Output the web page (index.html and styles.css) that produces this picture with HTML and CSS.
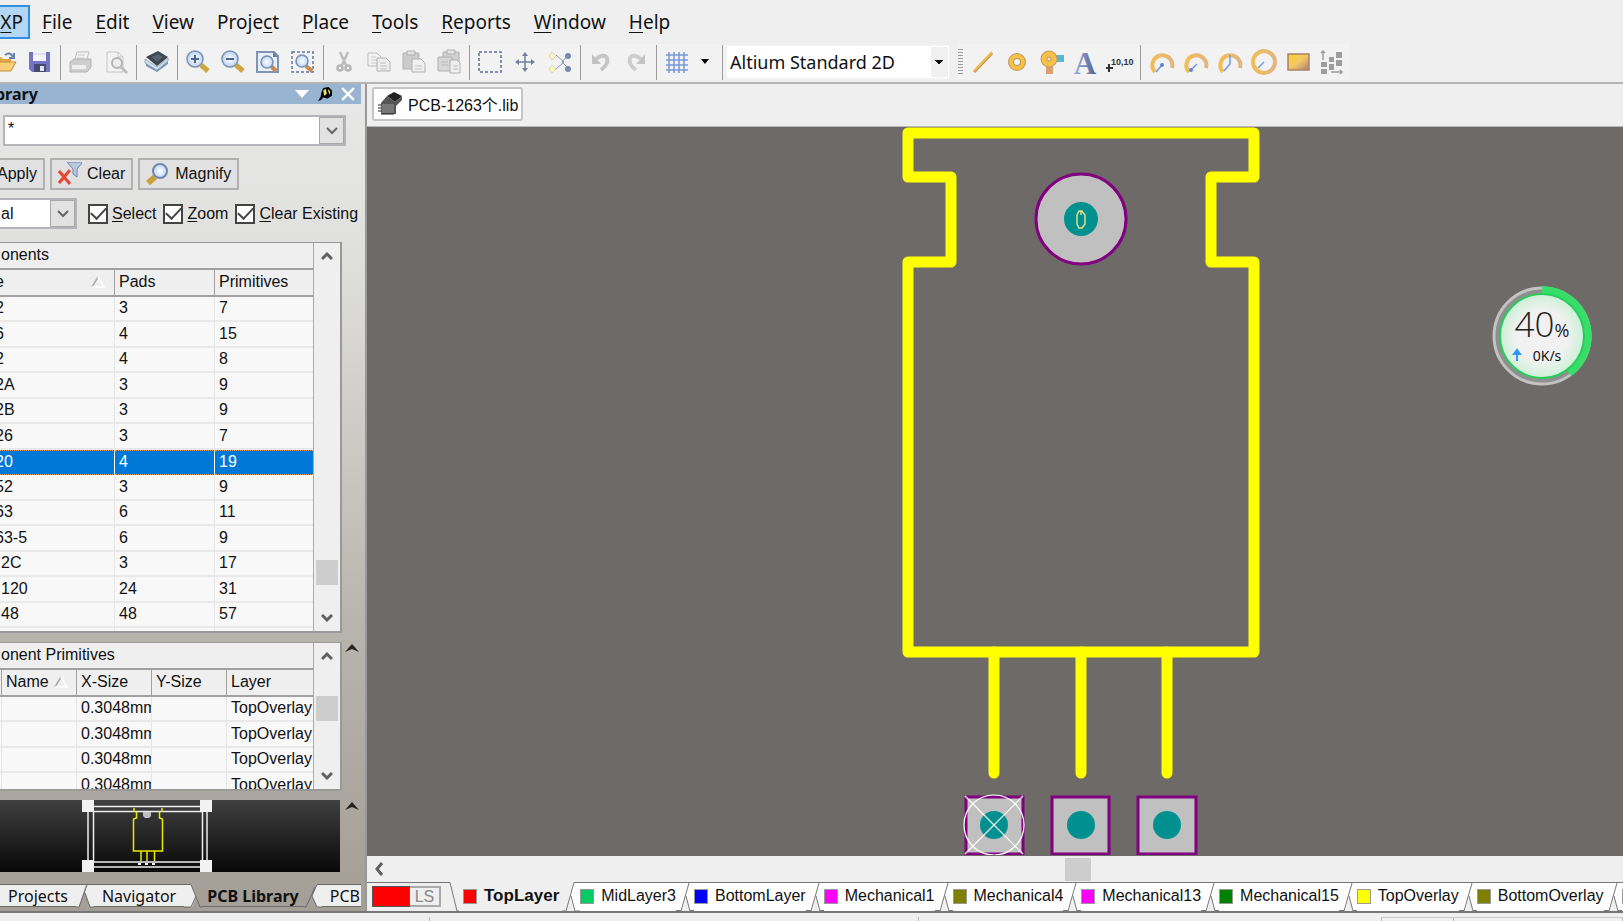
FILE: index.html
```html
<!DOCTYPE html>
<html lang="en">
<head>
  <meta charset="UTF-8" />
  <meta name="viewport" content="width=device-width, initial-scale=1.0"/>
  <title>PCB Library</title>
  <link rel="stylesheet" href="styles.css">
</head>
<body>
  <svg class="defs" width="0" height="0" aria-hidden="true">
    <defs>
      <linearGradient id="gold" x1="0" y1="0" x2="1" y2="1">
        <stop offset="0" stop-color="#fcd02e"/><stop offset="0.5" stop-color="#f3c867"/><stop offset="1" stop-color="#b07878"/>
      </linearGradient>
      <linearGradient id="arc" x1="0" y1="0" x2="1" y2="0">
        <stop offset="0" stop-color="#f3bd55"/><stop offset="1" stop-color="#e2b583"/>
      </linearGradient>
      <linearGradient id="blueA" x1="0" y1="0" x2="1" y2="0">
        <stop offset="0" stop-color="#9aaee0"/><stop offset="1" stop-color="#53618c"/>
      </linearGradient>
      <radialGradient id="glass">
        <stop offset="0" stop-color="#ffffff"/><stop offset="1" stop-color="#bcd3f4"/>
      </radialGradient>
      <radialGradient id="ball">
        <stop offset="0.6" stop-color="#f1f1f1"/><stop offset="1" stop-color="#cdf0d6"/>
      </radialGradient>
    </defs>
  </svg>

  <nav class="menubar">
    <button class="active"><u>X</u>P</button>
    <button><u>F</u>ile</button>
    <button><u>E</u>dit</button>
    <button><u>V</u>iew</button>
    <button>Proje<u>c</u>t</button>
    <button><u>P</u>lace</button>
    <button><u>T</u>ools</button>
    <button><u>R</u>eports</button>
    <button><u>W</u>indow</button>
    <button><u>H</u>elp</button>
  </nav>

  <div class="toolbar">
    <div class="tools">
      <button title="Open"><svg viewBox="0 0 24 24"><path d="M1 7h7l2 2h8v12H1z" fill="#e3a845"/><path d="M5 12h18l-5 9H1z" fill="#f9cf76" stroke="#c28b34"/><path d="M12 5q5-4 8 2M21 3v5h-5" fill="none" stroke="#6883ac" stroke-width="2"/></svg></button>
      <button title="Save"><svg viewBox="0 0 24 24"><path d="M1 2h21v20H4l-3-3z" fill="#7375c4"/><path d="M5 2h13v9H5z" fill="#f4f4fb"/><path d="M5 4h13" stroke="#c8c9e8"/><path d="M6 14h12v8H6z" fill="#454a72"/><path d="M12 16h4v5h-4z" fill="#e4e4f0"/></svg></button>
      <span class="sep"></span>
      <button title="Print"><svg viewBox="0 0 24 24"><path d="M8 2h12l-3 10H5z" fill="#f4f4f4" stroke="#bdbdbd"/><path d="M9 5h7M8 8h7" stroke="#c8c8c8"/><path d="M1 12l4-3h17v8l-4 5H1z" fill="#cecece" stroke="#b4b4b4"/><path d="M3 15h14v4H3z" fill="#eee"/></svg></button>
      <button title="Preview"><svg viewBox="0 0 24 24"><path d="M3 2h11l5 5v15H3z" fill="#f3f3f3" stroke="#c6c6c6"/><path d="M14 2v5h5" fill="none" stroke="#c6c6c6"/><circle cx="13" cy="13" r="5" fill="#ececec" stroke="#b4b4b4" stroke-width="2"/><path d="M17 17l6 6" stroke="#bdbdbd" stroke-width="3"/></svg></button>
      <span class="sep"></span>
      <button title="Board"><svg viewBox="0 0 24 24"><path d="M1 13l11 7 11-9v3l-11 8-11-6z" fill="#7895b5"/><path d="M0 9l12 8 11-9v3l-11 9-12-7z" fill="#d2e0ec" stroke="#94a9bf"/><path d="M1 7l12-6 10 6-11 9z" fill="#3d4650"/><path d="M6 7l7-3 5 3-6 5z" fill="#56626f"/></svg></button>
      <span class="sep"></span>
      <button title="Zoom in"><svg viewBox="0 0 24 24"><path d="M15 15l7 6" stroke="#d0a540" stroke-width="5"/><circle cx="9" cy="9" r="8" fill="url(#glass)" stroke="#7890b4" stroke-width="1.5"/><path d="M5 9h8M9 5v8" stroke="#4d6388" stroke-width="2"/></svg></button>
      <button title="Zoom out"><svg viewBox="0 0 24 24"><path d="M15 15l7 6" stroke="#d0a540" stroke-width="5"/><circle cx="9" cy="9" r="8" fill="url(#glass)" stroke="#7890b4" stroke-width="1.5"/><path d="M5 9h8" stroke="#4d6388" stroke-width="2"/></svg></button>
      <button title="Fit document"><svg viewBox="0 0 24 24"><path d="M1 2h17l4 4v16H1z" fill="#e9eff9" stroke="#8093b4" stroke-width="2"/><path d="M17 2v5h5" fill="#6b80a4"/><path d="M15 16l5 5" stroke="#c98a4f" stroke-width="4"/><circle cx="11" cy="12" r="6" fill="url(#glass)" stroke="#7890b4" stroke-width="1.5"/></svg></button>
      <button title="Zoom area"><svg viewBox="0 0 24 24"><path d="M1 2h21v20H1z" fill="none" stroke="#66779a" stroke-width="1.5" stroke-dasharray="3 2"/><path d="M15 16l6 5" stroke="#c98a4f" stroke-width="4"/><circle cx="11" cy="11" r="6" fill="url(#glass)" stroke="#7890b4" stroke-width="1.5"/></svg></button>
      <span class="sep"></span>
      <button title="Cut"><svg viewBox="0 0 24 24"><path d="M8 2l6 13M16 2l-6 13" stroke="#bcbcbc" stroke-width="2.5"/><circle cx="8" cy="18" r="2.500" fill="none" stroke="#b6b6b6" stroke-width="2.500"/><circle cx="16" cy="18" r="2.500" fill="none" stroke="#b6b6b6" stroke-width="2.500"/></svg></button>
      <button title="Copy"><svg viewBox="0 0 24 24"><path d="M1 3h9l4 4v9H1z" fill="#f2f2f2" stroke="#bcbcbc"/><path d="M4 7h5M4 10h6M4 13h6" stroke="#cacaca"/><path d="M10 8h9l4 4v9H10z" fill="#ededed" stroke="#b2b2b2"/><path d="M13 13h6M13 16h7M13 19h7" stroke="#c0c0c0"/></svg></button>
      <button title="Paste"><svg viewBox="0 0 24 24"><path d="M1 3h16v16H1z" fill="#cbcbcb" stroke="#b4b4b4"/><path d="M5 1h8v4H5z" fill="#e2e2e2" stroke="#b0b0b0"/><path d="M10 9h9l4 4v9H10z" fill="#f0f0f0" stroke="#b0b0b0"/><path d="M13 16h7M13 19h7" stroke="#c3c3c3"/></svg></button>
      <button title="Paste array"><svg viewBox="0 0 24 24"><path d="M6 2h16v14H6z" fill="#d1d1d1" stroke="#b0b0b0"/><path d="M10 0h8v4h-8z" fill="#e5e5e5" stroke="#b0b0b0"/><path d="M1 7h14v14H1z" fill="#d7d7d7" stroke="#b0b0b0"/><path d="M13 10h7l3 3v10H13z" fill="#efefef" stroke="#b0b0b0"/><path d="M4 12h7M4 15h7M16 16h5M16 19h5" stroke="#bbb"/></svg></button>
      <span class="sep"></span>
      <button title="Select area"><svg viewBox="0 0 24 24"><path d="M1 2h22v20H1z" fill="none" stroke="#5f6f94" stroke-width="1.5" stroke-dasharray="3 2"/></svg></button>
      <button title="Move"><svg viewBox="0 0 24 24"><path d="M3 12h18M12 3v18" stroke="#71809c" stroke-width="1.5"/><path d="M2 12l4-3v6zM22 12l-4-3v6zM12 2l-3 4h6zM12 22l-3-4h6z" fill="#71809c"/></svg></button>
      <button title="Clear filter"><svg viewBox="0 0 24 24"><path d="M8 5l8 7-8 7M14 12l8 8M14 12l6-7" fill="none" stroke="#8f9cb4"/><path d="M4 2l4 4-4 4-3-4zM4 15l4 4-4 4-3-4z" fill="#fbf8bc" stroke="#b9bbaf" stroke-width=".5"/><circle cx="20" cy="6" r="3" fill="#7589ad"/><circle cx="20" cy="19" r="3" fill="#7589ad"/></svg></button>
      <span class="sep"></span>
      <button title="Undo"><svg viewBox="0 0 24 24"><path d="M7 9q8-6 11-1 2 6-6 12" fill="none" stroke="#c6c6c6" stroke-width="4"/><path d="M3 4v10h9z" fill="#c1c1c1"/></svg></button>
      <button title="Redo"><svg viewBox="0 0 24 24"><path d="M17 9q-8-6-11-1-2 6 6 12" fill="none" stroke="#cecece" stroke-width="4"/><path d="M21 4v10h-9z" fill="#c4c4c4"/></svg></button>
      <span class="sep"></span>
      <button title="Grid"><svg viewBox="0 0 24 24"><path d="M1 5h22M1 10h22M1 15h22M1 20h22M4 2v21M9 2v21M14 2v21M19 2v21" stroke="#7899d8" stroke-width="1.5"/></svg></button>
      <button class="narrow" title="Grid options"><svg viewBox="0 0 10 6"><path d="M1 0h8L5 5z"/></svg></button>
      <span class="sep last"></span>
      <select aria-label="View configuration"><option>Altium Standard 2D</option></select>
    </div>
    <div class="tools draw">
      <span class="grip"></span>
      <button title="Line"><svg viewBox="0 0 24 24"><path d="M3 22L21 3" stroke="#c88f52" stroke-width="3"/><path d="M3 21L21 2" stroke="#f5bd4b" stroke-width="2"/></svg></button>
      <button title="Pad"><svg viewBox="0 0 24 24"><circle cx="12" cy="12" r="6" fill="none" stroke="#be9560" stroke-width="6"/><circle cx="12" cy="12" r="6" fill="none" stroke="#f7c149" stroke-width="4"/></svg></button>
      <button title="Via"><svg viewBox="0 0 24 24"><path d="M7 14h7v10H7z" fill="#daa070"/><path d="M14 5h11v7H14z" fill="#58b7d4"/><circle cx="10" cy="9" r="5" fill="#f0e3c4" stroke="#c69a5a" stroke-width="7"/><circle cx="10" cy="9" r="5" fill="none" stroke="#f7c149" stroke-width="5"/></svg></button>
      <button title="String"><svg class="letter" viewBox="0 0 24 24"><text x="12" y="24" text-anchor="middle" fill="url(#blueA)">A</text></svg></button>
      <button title="Coordinate"><svg class="coord" viewBox="0 0 28 24"><path d="M1 18h7M4 14v8" stroke="#333" stroke-width="2"/><text x="6" y="15">10,10</text></svg></button>
      <span class="sep"></span>
      <button title="Arc (center)"><svg viewBox="0 0 24 24"><path d="M5 22A10 10 0 1 1 22 18" fill="none" stroke="url(#arc)" stroke-width="4"/><path d="M6 22l6-7" stroke="#6f98e6" stroke-width="1.5"/><circle cx="12" cy="15" r="2" fill="#5f84ce"/></svg></button>
      <button title="Arc (edge)"><svg viewBox="0 0 24 24"><path d="M5 22A10 10 0 1 1 22 18" fill="none" stroke="url(#arc)" stroke-width="4"/><path d="M7 20l6-6" stroke="#6f98e6" stroke-width="1.5"/><circle cx="7" cy="20" r="2" fill="#5f84ce"/></svg></button>
      <button title="Arc (any angle)"><svg viewBox="0 0 24 24"><path d="M5 22A10 10 0 1 1 22 18" fill="none" stroke="url(#arc)" stroke-width="4"/><path d="M6 21l6-7V5" fill="none" stroke="#6f98e6" stroke-width="1.5"/></svg></button>
      <button title="Full circle"><svg viewBox="0 0 24 24"><circle cx="12" cy="12" r="11" fill="none" stroke="url(#arc)" stroke-width="4"/><path d="M6 18l6-6" stroke="#6f98e6" stroke-width="1.5"/></svg></button>
      <button title="Fill"><svg viewBox="0 0 24 24"><path d="M2 4h21v16H2z" fill="url(#gold)" stroke="#a98467" stroke-width="1.5"/></svg></button>
      <button title="Array paste"><svg viewBox="0 0 24 24"><path d="M1 12h6v5H1zM1 19h6v5H1zM9 7h5v5H9zM9 14h5v6H9zM16 2h6v6h-6zM16 10h6v6h-6z" fill="#9d9d9d"/><path d="M3 10V1M1 3l2-2 2 2M11 22h11M20 20l2 2-2 2" fill="none" stroke="#9d9d9d" stroke-width="1.5"/></svg></button>
    </div>
  </div>

  <div class="workspace">
    <aside class="panel">
      <div class="panel-title">
        <span>brary</span>
        <button title="Menu"><svg viewBox="0 0 14 14"><path d="M0 3h14L7 11z" fill="#fff"/></svg></button>
        <button title="Pin"><svg viewBox="0 0 16 16"><path d="M6 1l6-1 4 4v6l-5 3-5-1-3 3-3 1 3-5 1-5z"/><path d="M6 4l3-2 1 6-3 2zM11 2l3 3-1 4z" fill="#f1e65a"/></svg></button>
        <button title="Close"><svg viewBox="0 0 12 12"><path d="M1 1l10 10M11 1L1 11" stroke="#fff" stroke-width="2"/></svg></button>
      </div>

      <div class="filter combo">
        <input type="text" value="*" aria-label="Mask">
        <button title="Show masks"><svg viewBox="0 0 12 8"><path d="M1 1l5 5 5-5" fill="none" stroke="#666" stroke-width="2"/></svg></button>
      </div>

      <div class="actions">
        <button class="apply">Apply</button>
        <button><svg viewBox="0 0 24 24"><path d="M9 0h16l-6 7v8l-4-3V7z" fill="#b8c9df" stroke="#6d85a9"/><path d="M1 9l11 13M12 8L1 21" stroke="#e84630" stroke-width="3"/></svg>Clear</button>
        <button><svg viewBox="0 0 24 24"><path d="M2 21l7-6" stroke="#c9a137" stroke-width="6"/><circle cx="14" cy="9" r="7" fill="url(#glass)" stroke="#6f87ad" stroke-width="2"/></svg>Magnify</button>
      </div>

      <div class="options">
        <div class="combo">
          <input type="text" value="al" aria-label="Mode">
          <button title="Show modes"><svg viewBox="0 0 12 8"><path d="M1 1l5 5 5-5" fill="none" stroke="#666" stroke-width="2"/></svg></button>
        </div>
        <label><input type="checkbox" checked><span><u>S</u>elect</span></label>
        <label><input type="checkbox" checked><span><u>Z</u>oom</span></label>
        <label><input type="checkbox" checked><span><u>C</u>lear Existing</span></label>
      </div>

      <div class="list components">
        <div class="list-body">
          <table>
            <colgroup><col class="c-name"><col class="c-pads"><col></colgroup>
            <thead>
              <tr class="group"><th colspan="3">onents</th></tr>
              <tr><th class="cut">e<svg class="sort" viewBox="0 0 14 12"><path d="M1 11L7 1" stroke="#aaa" stroke-width="1.5"/><path d="M7 1l6 10H1" fill="none" stroke="#fff" stroke-width="1.5"/></svg></th><th>Pads</th><th>Primitives</th></tr>
            </thead>
            <tbody>
              <tr><td class="cut">2</td><td>3</td><td>7</td></tr>
              <tr><td class="cut">6</td><td>4</td><td>15</td></tr>
              <tr><td class="cut">2</td><td>4</td><td>8</td></tr>
              <tr><td class="cut">2A</td><td>3</td><td>9</td></tr>
              <tr><td class="cut">2B</td><td>3</td><td>9</td></tr>
              <tr><td class="cut">26</td><td>3</td><td>7</td></tr>
              <tr class="selected"><td class="cut">20</td><td>4</td><td>19</td></tr>
              <tr><td class="cut">52</td><td>3</td><td>9</td></tr>
              <tr><td class="cut">63</td><td>6</td><td>11</td></tr>
              <tr><td class="cut">63-5</td><td>6</td><td>9</td></tr>
              <tr><td>2C</td><td>3</td><td>17</td></tr>
              <tr><td>120</td><td>24</td><td>31</td></tr>
              <tr><td>48</td><td>48</td><td>57</td></tr>
              <tr><td></td><td></td><td></td></tr>
            </tbody>
          </table>
        </div>
        <div class="scroll">
          <button title="Up"><svg viewBox="0 0 12 10"><path d="M1 8l5-5 5 5" fill="none" stroke="#606060" stroke-width="3"/></svg></button>
          <div class="track low"><i></i></div>
          <button title="Down"><svg viewBox="0 0 12 10"><path d="M1 2l5 5 5-5" fill="none" stroke="#606060" stroke-width="3"/></svg></button>
        </div>
      </div>

      <div class="section">
        <div class="list primitives">
          <div class="list-body">
            <table>
              <colgroup><col class="c-edge"><col class="c-size"><col class="c-size"><col class="c-size"><col></colgroup>
              <thead>
                <tr class="group"><th colspan="5">onent Primitives</th></tr>
                <tr><th></th><th>Name<svg class="sort" viewBox="0 0 14 12"><path d="M1 11L7 1" stroke="#aaa" stroke-width="1.5"/><path d="M7 1l6 10H1" fill="none" stroke="#fff" stroke-width="1.5"/></svg></th><th>X-Size</th><th>Y-Size</th><th>Layer</th></tr>
              </thead>
              <tbody>
                <tr><td></td><td></td><td>0.3048mm</td><td></td><td>TopOverlay</td></tr>
                <tr><td></td><td></td><td>0.3048mm</td><td></td><td>TopOverlay</td></tr>
                <tr><td></td><td></td><td>0.3048mm</td><td></td><td>TopOverlay</td></tr>
                <tr><td></td><td></td><td>0.3048mm</td><td></td><td>TopOverlay</td></tr>
              </tbody>
            </table>
          </div>
          <div class="scroll">
            <button title="Up"><svg viewBox="0 0 12 10"><path d="M1 8l5-5 5 5" fill="none" stroke="#606060" stroke-width="3"/></svg></button>
            <div class="track mid"><i></i></div>
            <button title="Down"><svg viewBox="0 0 12 10"><path d="M1 2l5 5 5-5" fill="none" stroke="#606060" stroke-width="3"/></svg></button>
          </div>
        </div>
        <button class="fold" title="Collapse"><svg viewBox="0 0 14 8"><path d="M0 8l7-8 7 8-7-3z" fill="#222"/></svg></button>
      </div>

      <div class="section">
        <div class="preview">
          <svg viewBox="0 0 132 72">
            <g fill="none" stroke="#eee" stroke-width="1.5">
              <path d="M7 6.500h119v60.500H7z"/><path d="M12.500 11.500h109v50.500h-109z"/>
            </g>
            <path d="M53 8v4M81 8v4M55.500 12v6l-3 1v32h29V19l-3-1v-6M60 51v10M66 51v10M73.500 51v10" fill="none" stroke="#eaea00" stroke-width="1.500"/>
            <path d="M62 12h8v4l-2 2h-4l-2-2z" fill="#c0c0c0"/>
            <path d="M1 0h12v12H1zM119 0h12v12h-12zM1 60h12v12H1zM119 60h12v12h-12zM57 63h3v2h-3zM64 63h3v2h-3zM71 63h3v2h-3z" fill="#f2f2f2"/>
          </svg>
        </div>
        <button class="fold" title="Collapse"><svg viewBox="0 0 14 8"><path d="M0 8l7-8 7 8-7-3z" fill="#222"/></svg></button>
      </div>

      <div class="panel-tabs">
        <button>Projects</button>
        <svg viewBox="0 0 18 24"><path d="M0 0h10L3 23H0zM10 0h8v23h-4L9 8z" fill="#efefef"/><path d="M0 .5h18M3 23L11 1M9 9l5 14M0 23h3M14 23h4" fill="none" stroke="#6b6b6b"/></svg>
        <button>Navigator</button>
        <svg viewBox="0 0 18 24"><path d="M0 0h7l5 13-4 10H0z" fill="#efefef"/><path d="M0 .5h7l9 22.500h2M7 23l5-11M0 23h7" fill="none" stroke="#6b6b6b"/></svg>
        <button class="active">PCB Library</button>
        <svg viewBox="0 0 18 24"><path d="M18 0h-5L8 12l5 11h5z" fill="#efefef"/><path d="M0 23h2l9-20M18 .5h-5L8 12l5 11h5" fill="none" stroke="#6b6b6b"/></svg>
        <button class="end">PCB</button>
      </div>
    </aside>

    <main class="editor">
      <div class="doc-tabs">
        <button><svg viewBox="0 0 24 24"><path d="M9 4l7-4 8 4-7 6z" fill="#222"/><path d="M9 4l8 6 7-6v4l-6 6v8H3V11z" fill="#555"/><path d="M3 12h13v9H3z" fill="#777"/><path d="M0 13h4M0 16h4M0 19h4M3 22h13" stroke="#222"/></svg>PCB-1263个.lib</button>
      </div>

      <div class="canvas">
        <svg class="drawing" width="1256" height="728" viewBox="0 0 1256 728">
          <g fill="none" stroke="#ff0" stroke-width="11" stroke-linejoin="round" stroke-linecap="round">
            <path d="M541 6H887V50H844V135H887V525H541V135H584V50H541Z"/>
            <path d="M627 525V646M714 525V646M800 525V646"/>
          </g>
          <circle cx="714" cy="92" r="45" fill="#c0c0c0" stroke="#800080" stroke-width="3"/>
          <circle cx="714" cy="92" r="17" fill="#009090"/>
          <path d="M712 84h3l3 4v9l-3 4h-3l-2-4v-9zM714 84v4" fill="none" stroke="#e0e08c" stroke-width="1.500"/>
          <g fill="#c0c0c0" stroke="#800080" stroke-width="3">
            <path d="M599 670h57v57h-57zM685 670h57v57h-57zM771 670h58v57h-58z"/>
          </g>
          <g fill="#009090">
            <circle cx="627" cy="698" r="14"/><circle cx="714" cy="698" r="14"/><circle cx="800" cy="698" r="14"/>
          </g>
          <g fill="none" stroke="#fff" stroke-width="1.200">
            <circle cx="627" cy="698" r="30"/><path d="M598 669l58 58M656 669l-58 58"/>
          </g>
        </svg>

        <div class="meter">
          <svg viewBox="0 0 100 100">
            <circle cx="50" cy="50" r="48" fill="#8f8f8f" stroke="#c2c2c2" stroke-width="3"/>
            <path d="M50 4A46 46 0 0 1 77 87" fill="none" stroke="#37df68" stroke-width="8"/>
            <circle cx="50" cy="50" r="42" fill="url(#ball)" stroke="#26cc5b" stroke-width="2"/>
            <path d="M25 75V66M22 68l3-4 3 4z" fill="#2f95ff" stroke="#2f95ff" stroke-width="2"/>
          </svg>
          <div class="percent">40<small>%</small></div>
          <div class="speed">0K/s</div>
        </div>
      </div>

      <div class="hscroll">
        <button title="Left"><svg viewBox="0 0 10 14"><path d="M8 1L3 7l5 6" fill="none" stroke="#606060" stroke-width="3"/></svg></button>
        <div class="htrack"><i></i></div>
      </div>

      <div class="layers">
        <button class="ls"><i></i><span>LS</span></button>
        <svg viewBox="0 0 18 30"><path d="M0 .5h9l7 28.500h2" fill="none" stroke="#777"/></svg>
        <button class="active"><i class="red"></i>TopLayer</button>
        <svg viewBox="0 0 18 30"><path d="M18 1h-6L8 15l4 14h6z" fill="#fff"/><path d="M0 29h4L12 .5h6M9 14l4 15h5" fill="none" stroke="#777"/></svg>
        <button><i class="green"></i>MidLayer3</button>
        <svg viewBox="0 0 18 30"><use href="#cut"/></svg>
        <button><i class="blue"></i>BottomLayer</button>
        <svg viewBox="0 0 18 30"><use href="#cut"/></svg>
        <button><i class="pink"></i>Mechanical1</button>
        <svg viewBox="0 0 18 30"><use href="#cut"/></svg>
        <button><i class="olive"></i>Mechanical4</button>
        <svg viewBox="0 0 18 30"><use href="#cut"/></svg>
        <button><i class="pink"></i>Mechanical13</button>
        <svg viewBox="0 0 18 30"><use href="#cut"/></svg>
        <button><i class="forest"></i>Mechanical15</button>
        <svg viewBox="0 0 18 30"><use href="#cut"/></svg>
        <button><i class="yellow"></i>TopOverlay</button>
        <svg viewBox="0 0 18 30"><use href="#cut"/></svg>
        <button><i class="olive"></i>BottomOverlay</button>
        <svg viewBox="0 0 18 30"><g id="cut"><path d="M0 1h18v28H0z" fill="#fff"/><path d="M10 14l4 15H6z" fill="#efefef"/><path d="M0 .5h18M5 29L13 1M10 14l4 15M0 28.500h5M14 28.500h4" fill="none" stroke="#777"/></g></svg>
        <button aria-label="Next layer"><i class="gray"></i></button>
      </div>
    </main>
  </div>

  <footer class="status">
    <span class="s1"></span><span class="s2"></span><span class="s3"></span><span class="s4"></span><span class="s5"></span>
  </footer>
</body>
</html>
```
FILE: styles.css
```css
* {
  box-sizing: border-box;
}

body {
  margin: 0;
  height: 100vh;
  overflow: hidden;
  display: flex;
  flex-direction: column;
  background: #efefef;
  color: #111;
  font-family: "Liberation Sans", Arial, sans-serif;
  font-size: 16px;
}

button, input, select {
  font: inherit;
  color: inherit;
}

button {
  border: none;
  background: none;
  padding: 0;
  flex: none;
}

svg {
  display: block;
}

.defs {
  position: absolute;
}

/* menu */
.menubar {
  display: flex;
  gap: 1px;
  padding-top: 5px;
  height: 44px;
  font-family: "Noto Sans", "Open Sans", sans-serif;
  font-size: 19px;
}

.menubar button {
  height: 34px;
  padding: 0 11px;
  line-height: 30px;
}

.menubar u {
  text-underline-offset: 3px;
}

.menubar .active {
  padding: 0 5px 0 0;
  width: 30px;
  text-align: right;
  background: #b3d7f5;
  border: 2px solid #2f8ee0;
  border-left: none;
}

/* toolbar */
.toolbar {
  display: flex;
  height: 40px;
  border-bottom: 2px solid #b4b4b4;
}

.tools {
  display: flex;
  align-items: center;
  height: 36px;
  margin-left: -13px;
  background: #f2f2f2;
}

.tools button {
  width: 35px;
  display: flex;
  justify-content: center;
}

.tools svg {
  width: 24px;
  height: 24px;
  overflow: visible;
}

.tools .narrow {
  width: 21px;
}

.tools .narrow svg {
  width: 10px;
  height: 6px;
}

.sep {
  width: 1px;
  height: 35px;
  margin: 0 2px 0 3px;
  background: #9a9a9a;
}

.sep.last {
  margin: 0 4px 0 7px;
}

/* arrow is stacked from four short bars */
.tools select {
  appearance: none;
  width: 222px;
  height: 32px;
  padding: 0 3px;
  border: none;
  border-radius: 0;
  background-color: #fff;
  background-image: linear-gradient(#111, #111), linear-gradient(#111, #111), linear-gradient(#111, #111), linear-gradient(#111, #111), linear-gradient(#f0f0f0, #f0f0f0);
  background-size: 8px 1px, 6px 1px, 4px 1px, 2px 1px, 17px 30px;
  background-position: 208px 14px, 209px 15px, 210px 16px, 211px 17px, 204px 1px;
  background-repeat: no-repeat;
  font-family: "Noto Sans", "Open Sans", sans-serif;
  font-size: 18px;
}

.draw {
  margin-left: 9px;
}

.draw button {
  width: 34px;
}

.draw .sep {
  margin: 0 4px;
}

.grip {
  width: 5px;
  height: 26px;
  margin-right: 3px;
  background: repeating-linear-gradient(#999 0 1px, #f2f2f2 1px 3px);
}

.letter text {
  font: bold 31px "Liberation Serif", serif;
}

.tools .coord {
  width: 28px;
}

.coord text {
  font-size: 9px;
  font-weight: bold;
  fill: #333;
}

/* left panel */
.workspace {
  flex: 1;
  min-height: 0;
  display: flex;
  border-bottom: 2px solid #777;
}

.panel {
  width: 367px;
  flex: none;
  overflow: hidden;
  display: flex;
  flex-direction: column;
  border-right: 2px solid #999;
  background: linear-gradient(#e8e8e8, #e0e0de 20%, #b8b5ae 65%, #a39e96);
}

.panel-title {
  display: flex;
  align-items: center;
  gap: 9px;
  height: 20px;
  margin-right: 4px;
  padding-right: 6px;
  background: #99b4d1;
}

.panel-title span {
  flex: 1;
  margin-left: -5px;
  font-family: "Noto Sans", sans-serif;
  font-weight: bold;
}

.panel-title svg {
  width: 14px;
  height: 14px;
}

.combo {
  display: flex;
  height: 31px;
  border: 2px solid #b5b5b9;
  background: #fff;
}

.combo input {
  flex: 1;
  min-width: 0;
  padding: 0 3px 4px;
  border: none;
  background: none;
}

.combo button {
  width: 25px;
  display: flex;
  align-items: center;
  justify-content: center;
  border: 1px solid #a8a8a8;
  background: #e2e2e2;
}

.combo svg {
  width: 12px;
  height: 8px;
}

.filter {
  margin: 11px 19px 0 3px;
}

.actions {
  display: flex;
  gap: 5px;
  margin-top: 12px;
}

.actions button {
  display: flex;
  align-items: center;
  gap: 5px;
  height: 32px;
  padding: 0 6px;
  border: 2px solid #b0b0b0;
  background: #e1e1e1;
}

.actions .apply {
  margin-left: -5px;
  padding-left: 0;
}

.actions svg {
  width: 24px;
  height: 24px;
}

.options {
  display: flex;
  align-items: center;
  gap: 7px;
  margin-top: 8px;
}

.options .combo {
  width: 77px;
  margin-right: 4px;
  border-left: none;
}

.options .combo input {
  padding: 0 1px;
}

.options label {
  display: flex;
  align-items: center;
  gap: 4px;
  white-space: nowrap;
}

.options u {
  text-underline-offset: 2px;
}

.options input[type="checkbox"] {
  appearance: none;
  width: 20px;
  height: 20px;
  margin: 0;
  border: 2px solid #444;
  background: #fff;
  display: grid;
  place-items: center;
}

.options input[type="checkbox"]::before {
  content: "";
  width: 13px;
  height: 7px;
  margin-bottom: 4px;
  border-left: 2px solid #444;
  border-bottom: 2px solid #444;
  transform: rotate(-47deg);
}

/* grids */
.list {
  display: flex;
  width: 342px;
  flex: none;
  border: 1px solid #999;
  border-width: 1px 2px 2px 0;
  background: #efefef;
}

.components {
  height: 391px;
  margin-top: 13px;
}

.primitives {
  height: 149px;
}

.list-body {
  flex: 1;
  overflow: hidden;
  border-right: 1px solid #aaa;
}

table {
  width: 100%;
  table-layout: fixed;
  border-collapse: separate;
  border-spacing: 0;
}

.c-name { width: 115px; }
.c-pads { width: 100px; }
.c-edge { width: 2px; }
.c-size { width: 75px; }

th, td {
  height: 25px;
  padding: 0 0 1px 4px;
  overflow: hidden;
  white-space: nowrap;
  text-align: left;
  font-weight: normal;
  background: #f8f8f8;
  border-right: 1px solid #e6e6e6;
  border-bottom: 2px solid #e9e9e9;
}

td:first-child, th:first-child {
  padding-left: 1px;
}

tbody tr:nth-child(even) td {
  height: 26px;
}

th {
  height: 27px;
  background: #efefef;
  border-right: 1px solid #a0a0a0;
  border-bottom: 2px solid #a0a0a0;
}

th:last-child, td:last-child {
  border-right: none;
}

.cut {
  text-indent: -6px;
}

.sort {
  float: right;
  width: 14px;
  height: 12px;
  margin: 3px 9px 0 0;
}

.primitives .sort {
  margin-right: 8px;
}

.selected td {
  background: #0078d7;
  color: #fff;
  border-right-color: #fff;
  border-bottom: 1px dotted #f0a050;
  border-top: 1px dotted #f0a050;
}

.scroll {
  width: 26px;
  display: flex;
  flex-direction: column;
  align-items: center;
}

.scroll button {
  height: 26px;
  padding: 0 6px;
}

.scroll svg {
  width: 12px;
  height: 10px;
}

.track {
  flex: 1;
  display: flex;
  flex-direction: column;
}

.track i {
  width: 22px;
  height: 25px;
  background: #cdcdcd;
}

.track.low {
  justify-content: flex-end;
  padding-bottom: 20px;
}

.track.mid {
  padding-top: 27px;
}

.section {
  display: flex;
  align-items: flex-start;
  gap: 3px;
  margin-top: 9px;
}

.fold {
  margin-top: 2px;
}

.fold svg {
  width: 14px;
  height: 8px;
}

.preview {
  width: 340px;
  height: 72px;
  margin-right: 2px;
  background: linear-gradient(#404040, #080808);
}

.preview svg {
  width: 132px;
  height: 72px;
  margin-left: 81px;
}

.panel-tabs {
  display: flex;
  height: 24px;
  margin: auto 4px 3px 0;
  overflow: hidden;
  font-family: "Noto Sans", "Open Sans", sans-serif;
}

.panel-tabs svg {
  flex: none;
  width: 18px;
  height: 24px;
}

.panel-tabs button {
  height: 23px;
  padding: 0 8px;
  line-height: 20px;
  background: #efefef;
  border-top: 1px solid #6b6b6b;
  border-bottom: 1px solid #6b6b6b;
}

.panel-tabs .active {
  padding: 0 5px;
  background: none;
  border-top-color: transparent;
  font-weight: bold;
}

/* editor */
.editor {
  flex: 1;
  min-width: 0;
  display: flex;
  flex-direction: column;
}

.doc-tabs {
  height: 43px;
  padding: 3px 5px;
  border-bottom: 1px solid #b5b8b8;
}

.doc-tabs button {
  display: flex;
  align-items: center;
  gap: 6px;
  height: 34px;
  padding: 0 3px 0 4px;
  border: 2px solid #c4c4c4;
  border-radius: 3px;
  background: #fff;
  font-family: "Liberation Sans", "Noto Sans CJK SC", sans-serif;
}

.doc-tabs svg {
  width: 24px;
  height: 24px;
}

.canvas {
  flex: 1;
  min-height: 0;
  position: relative;
  overflow: hidden;
  background: #6e6a68;
}

.meter {
  position: absolute;
  top: 159px;
  right: 31px;
  width: 100px;
  height: 100px;
  padding-top: 20px;
  text-align: center;
}

.meter svg {
  position: absolute;
  inset: 0;
}

.percent, .speed {
  position: relative;
}

.percent {
  font: 300 35px/36px "Open Sans", "Noto Sans", sans-serif;
  color: #222;
}

.percent small {
  font-size: 18px;
  font-weight: 400;
}

.speed {
  padding-left: 10px;
  font: 14px/16px "Noto Sans", sans-serif;
}

.hscroll {
  display: flex;
  align-items: center;
  height: 26px;
}

.hscroll button {
  width: 24px;
  display: flex;
  justify-content: center;
}

.hscroll svg {
  width: 10px;
  height: 14px;
}

.htrack {
  flex: 1;
}

.htrack i {
  display: block;
  width: 26px;
  height: 23px;
  margin-left: calc(55% - 4px);
  background: #cdcdcd;
}

.layers {
  display: flex;
  height: 29px;
  overflow: hidden;
}

.layers > svg {
  flex: none;
  width: 18px;
  height: 30px;
}

.layers button {
  display: flex;
  align-items: center;
  gap: 7px;
  height: 29px;
  padding-bottom: 2px;
  background: #fff;
  border-top: 1px solid #777;
}

.layers button i {
  width: 14px;
  height: 15px;
  border: 1px solid #999;
}

.layers .active {
  padding: 0 3px 2px 4px;
  background: none;
  border-top-color: transparent;
  font-size: 17px;
  font-weight: bold;
}

.layers .ls {
  gap: 0;
  padding: 0 0 2px 5px;
  background: none;
  color: #888;
}

.layers .ls i {
  width: 38px;
  height: 21px;
  background: #f00;
  border: 1px solid #555;
}

.ls span {
  width: 31px;
  height: 21px;
  border: 2px solid #aaa;
  border-left: none;
  line-height: 18px;
}

.red { background: #f00; }
.green { background: #00cc66; }
.blue { background: #00f; }
.pink { background: #f0f; }
.olive { background: #808000; }
.forest { background: #008000; }
.yellow { background: #ff0; }
.gray { background: #808080; }

/* status */
.status {
  display: flex;
  align-items: flex-end;
  height: 8px;
}

.status span {
  height: 4px;
  border-right: 1px solid #bbb;
}

.status .s1 { width: 430px; }
.status .s2 { width: 489px; }
.status .s3 { flex: 1; }
.status .s4 { width: 72px; border-top: 1px solid #ccc; }
.status .s5 { width: 169px; border-top: 1px solid #ccc; }
```
